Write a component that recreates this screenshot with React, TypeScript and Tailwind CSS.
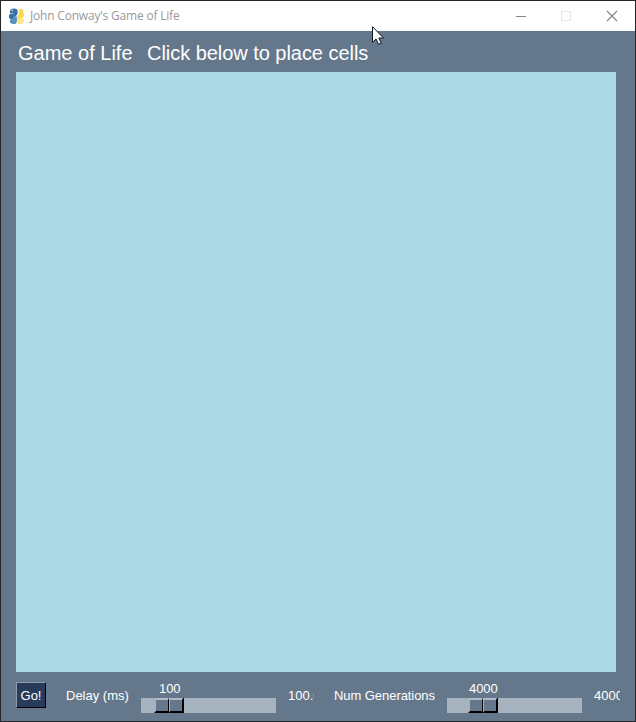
import React from "react";

function Logo() {
  return (
    <svg width="17" height="17" viewBox="0 0 17 17" className="shrink-0">
      <path d="M3 1.4C4.6.2 7.6.2 9.2 1.4C10 2.6 9.8 5.4 9 7C8 8.4 6.4 8.4 5.4 9.8L4.4 11.8C2.2 12 1 10 .9 8.4C.9 7 1.8 6 2.8 5.6H5.6V5H2C1.6 3.6 2 2.2 3 1.4Z" fill="#3472a6" />
      <path d="M10.6 1.4C12 .7 14.4.9 15 2.2C15.5 3.2 15.1 4.5 15.6 5.4C16.6 7.4 15.8 9.2 14 10C12.4 10.6 11 10 9.6 10.8C8.6 9.4 9 8.2 10.2 7.2C11.2 5.4 11 3.4 10.6 1.4Z" fill="#ffd748" />
      <path d="M2 12.3C4 11.8 5 10.6 5.6 9.2C6.4 8.2 7.8 8 8.8 8.8C9.2 11 9 13.6 8.2 15.2C6.8 16.4 4 16.2 2.8 15.2C1.8 14.4 1.6 13.2 2 12.3Z" fill="#5790bd" />
      <path d="M9.4 10.6C11 9.2 14.2 9.4 15.7 11.4V14C14.8 16 11.2 16.6 9.6 15.4C8.8 14 8.8 12 9.4 10.6Z" fill="#ffe777" />
      <rect x="3.7" y="2.1" width="1.2" height="1.2" fill="#e8f1f7" />
      <rect x="12.2" y="13.5" width="1.1" height="1.1" fill="#fff" />
    </svg>
  );
}

function Slider({ value, label, offset }: { value: string; label: string; offset: string }) {
  return (
    <div className="w-[135px] shrink-0">
      <div className="h-[18px] text-[13px] leading-[18px] tracking-[-0.1px]">
        <span className={label}>{value}</span>
      </div>
      <div className="flex h-[15px] bg-[#a6b2be]">
        <div className={offset} />
        <div className="flex border-r border-black">
          <div className="h-[15px] w-[15px] border-t-2 border-r border-b-2 border-l-2 border-t-[#b0bbc6] border-r-black border-b-black border-l-[#a6b2be] bg-[#64778d]" />
          <div className="h-[15px] w-[14px] border-t-2 border-r border-b-2 border-l border-t-[#b0bbc6] border-r-black border-b-black border-l-[#a6b2be] bg-[#64778d]" />
        </div>
      </div>
    </div>
  );
}

export default function App() {
  return (
    <div className="relative flex h-[722px] w-[636px] flex-col overflow-hidden border border-[#252628] bg-[#64778b] font-['Liberation_Sans',Arial,sans-serif] text-white">
      <header className="flex h-[30px] shrink-0 items-center bg-white pl-[7px]">
        <Logo />
        <h1 className="ml-[5px] w-[160px] whitespace-nowrap font-['Open_Sans','Noto_Sans',sans-serif] text-[12px] leading-[16px] tracking-[-0.2px] text-[#999]">
          John Conway's Game of Life
        </h1>
        <svg className="ml-auto mr-[17px]" width="102" height="12" viewBox="0 0 102 12" fill="none">
          <path d="M0 6.5H10" stroke="#858585" />
          <rect x="45.5" y="1.5" width="9" height="9" stroke="#e5e5e5" />
          <path d="M91 1L101 11M101 1L91 11" stroke="#858585" strokeWidth="1.1" />
        </svg>
      </header>
      <div className="flex h-[41px] shrink-0 gap-[14px] pt-[11px] pl-[17px] text-[20px] leading-[23px]">
        <span className="w-[115px] whitespace-nowrap">Game of Life</span>
        <span className="whitespace-nowrap tracking-[-0.04px]">Click below to place cells</span>
      </div>
      <div className="ml-[15px] h-[600px] w-[600px] shrink-0 bg-[#add8e6]" />
      <footer className="flex pl-[15px] pt-[8px] text-[13px]">
        <button className="mt-[2px] flex h-[26px] w-[30px] shrink-0 items-center justify-center border border-t-[#8d9aaa] border-r-black border-b-black border-l-[#8d9aaa] bg-[#283b5b] pt-px">
          Go!
        </button>
        <span className="mt-[7px] ml-[20px] w-[75px] shrink-0 whitespace-nowrap leading-[18px]">Delay (ms)</span>
        <Slider value="100" label="ml-[18px]" offset="w-[13px]" />
        <span className="mt-[7px] ml-[12px] w-[26px] shrink-0 overflow-hidden whitespace-nowrap leading-[18px]">100.0</span>
        <span className="mt-[7px] ml-[20px] w-[113px] shrink-0 whitespace-nowrap leading-[18px] tracking-[-0.06px]">Num Generations</span>
        <Slider value="4000" label="ml-[22px]" offset="w-[21px]" />
        <span className="mt-[7px] ml-[12px] w-[26px] shrink-0 overflow-hidden whitespace-nowrap leading-[18px]">4000.0</span>
      </footer>
      <svg className="absolute top-[25px] left-[371px]" width="13" height="20" viewBox="0 0 13 20">
        <path d="M.5.7V16.4L4.1 13L6.6 18.4L9.2 17.2L6.8 12H11.5Z" fill="white" stroke="#101522" />
      </svg>
    </div>
  );
}
